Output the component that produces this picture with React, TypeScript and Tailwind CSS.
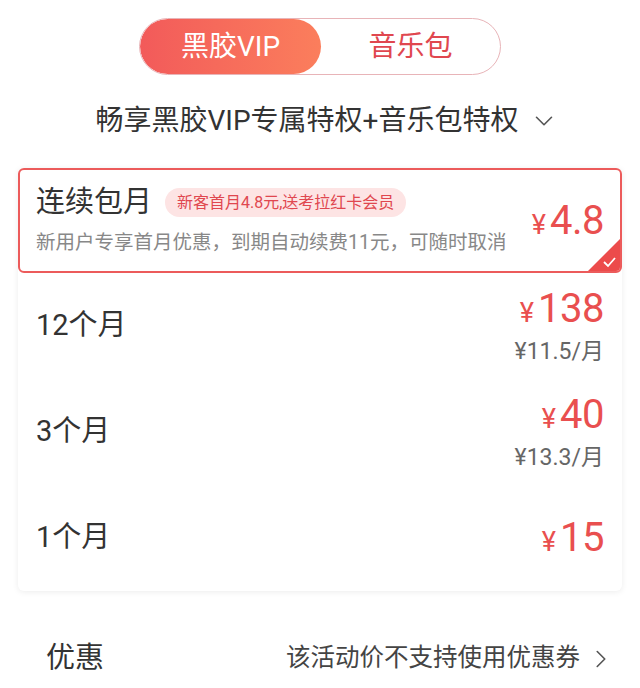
import { ChevronDown, ChevronRight } from 'lucide-react';

const plans = [
  { id: '12', label: '12个月', price: '138', perMonth: '¥11.5/月' },
  { id: '3', label: '3个月', price: '40', perMonth: '¥13.3/月' },
  { id: '1', label: '1个月', price: '15', perMonth: '' },
];

function Price({ value }: { value: string }) {
  return (
    <div className="flex items-baseline text-[#e94f4f] leading-none">
      <span className="text-[27px] mr-[4px]">¥</span>
      <span className="text-[40px] tracking-[-0.5px]">{value}</span>
    </div>
  );
}

export default function App() {
  return (
    <div
      className="w-[640px] h-[688px] bg-white overflow-hidden text-[#333]"
      style={{ fontFamily: "Roboto, 'Noto Sans CJK SC', sans-serif" }}
    >
      {/* Tabs */}
      <div className="flex justify-center pt-[18px]">
        <div className="flex w-[362px] h-[57px] rounded-full border border-[#e8b4b8] overflow-hidden">
          <div className="w-[181px] rounded-full bg-gradient-to-r from-[#f25a5a] to-[#fb7e5c] flex items-center justify-center text-white text-[28px]">
            黑胶VIP
          </div>
          <div className="flex-1 flex items-center justify-center text-[#e0474f] text-[28px]">
            音乐包
          </div>
        </div>
      </div>

      {/* Subtitle */}
      <div className="flex items-center justify-center mt-[31px] h-[30px] gap-[10px]">
        <span className="text-[28px] text-[#333] ml-[14px] leading-none">畅享黑胶VIP专属特权+音乐包特权</span>
        <ChevronDown className="w-[30px] h-[30px] text-[#555]" strokeWidth={1.3} />
      </div>

      {/* Plans card */}
      <div className="mx-[18px] mt-[32px] rounded-[6px] bg-white shadow-[0_1px_6px_rgba(0,0,0,0.08)]">
        <div className="relative h-[105px] rounded-[6px] border-2 border-[#ec5b5b] flex items-center justify-between pl-[16px] pr-[16px] overflow-hidden">
          <div className="flex flex-col">
            <div className="flex items-center">
              <span className="text-[29px] text-[#333] leading-none">连续包月</span>
              <span className="ml-[13px] px-[12px] h-[29px] rounded-full bg-[#fde4e4] text-[#e0474f] text-[16px] flex items-center">
                新客首月4.8元,送考拉红卡会员
              </span>
            </div>
            <span className="mt-[16px] text-[19.5px] text-[#888] leading-none">
              新用户专享首月优惠，到期自动续费11元，可随时取消
            </span>
          </div>
          <Price value="4.8" />
          <div className="absolute right-0 bottom-0 w-[32px] h-[32px]">
            <svg viewBox="0 0 32 32" className="w-full h-full">
              <path d="M32 0 L32 32 L0 32 Z" fill="#ec4b4b" />
              <path d="M16 23 L20 27 L27 19" fill="none" stroke="#fff" strokeWidth="1.8" />
            </svg>
          </div>
        </div>

        {plans.map((p) => (
          <div key={p.id} className="h-[106px] flex items-center justify-between pl-[18px] pr-[18px]">
            <span className="text-[29px] text-[#333]">{p.label}</span>
            <div className="flex flex-col items-end">
              <Price value={p.price} />
              {p.perMonth && <span className="mt-[11px] text-[23px] text-[#666] leading-none">{p.perMonth}</span>}
            </div>
          </div>
        ))}
      </div>

      {/* Coupon */}
      <div className="flex items-center justify-between mt-[46px] pl-[46px] pr-[24px]">
        <span className="text-[29px] text-[#333]">优惠</span>
        <div className="flex items-center gap-[6px]">
          <span className="text-[24.5px] text-[#444]">该活动价不支持使用优惠券</span>
          <ChevronRight className="w-[30px] h-[30px] text-[#555]" strokeWidth={1.3} />
        </div>
      </div>
    </div>
  );
}
